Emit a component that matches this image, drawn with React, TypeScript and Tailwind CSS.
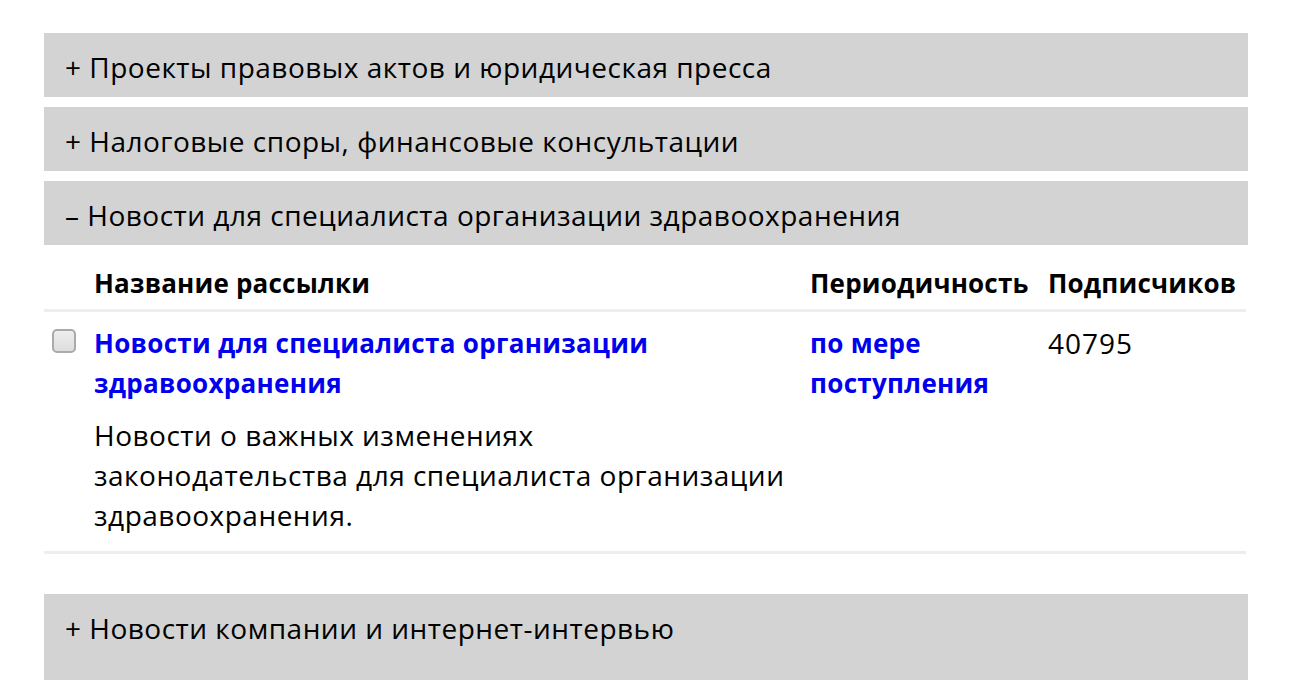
import React from "react";

const Bar: React.FC<{ sign: string; title: string; tall?: boolean }> = ({ sign, title, tall }) => (
  <div className={`bg-[#d3d3d3] pl-[21px] pt-[14px] ${tall ? "h-[100px]" : "h-[64px]"}`}>
    <span className="text-[28px] leading-[40px] tracking-[0.5px] text-black">
      {sign} {title}
    </span>
  </div>
);

export default function App() {
  return (
    <div className="min-h-[680px] bg-white font-['Open_Sans',sans-serif] overflow-hidden">
      <div className="mx-[44px] pt-[33px] flex flex-col">
        <Bar sign="+" title="Проекты правовых актов и юридическая пресса" />
        <div className="h-[10px]" />
        <Bar sign="+" title="Налоговые споры, финансовые консультации" />
        <div className="h-[10px]" />
        <Bar sign="–" title="Новости для специалиста организации здравоохранения" />

        <div className="grid grid-cols-[50px_716px_238px_198px] leading-[40px]">
          <div className="border-b-[3px] border-[#eee] h-[67px]" />
          <div className="border-b-[3px] border-[#eee] h-[67px] pt-[18px] text-[26px] tracking-[0.2px] font-bold text-black">Название рассылки</div>
          <div className="border-b-[3px] border-[#eee] h-[67px] pt-[18px] text-[26px] tracking-[0.2px] font-bold text-black whitespace-nowrap">Периодичность</div>
          <div className="border-b-[3px] border-[#eee] h-[67px] pt-[18px] text-[26px] tracking-[0.2px] font-bold text-black whitespace-nowrap">Подписчиков</div>

          <div className="border-b-[3px] border-[#eee] pt-[17px]">
            <div className="ml-[8px] w-[24px] h-[24px] rounded-[5px] border-2 border-[#aaa] bg-gradient-to-b from-[#eee] to-[#ddd]" />
          </div>
          <div className="border-b-[3px] border-[#eee] pt-[11px] pb-[16px] pr-[12px]">
            <a className="block text-[26px] leading-[40px] tracking-[0.3px] font-bold text-[#0000ee]">Новости для специалиста организации здравоохранения</a>
            <p className="mt-[12px] text-[28px] leading-[40px] tracking-[0.5px] text-black max-w-[700px]">
              Новости о важных изменениях законодательства для специалиста организации здравоохранения.
            </p>
          </div>
          <div className="border-b-[3px] border-[#eee] pt-[11px] pr-[10px]">
            <a className="block text-[26px] leading-[40px] tracking-[0.3px] font-bold text-[#0000ee]">по мере поступления</a>
          </div>
          <div className="border-b-[3px] border-[#eee] pt-[11px] text-[28px] leading-[40px] tracking-[1px] text-black">40795</div>
        </div>

        <div className="h-[40px]" />
        <Bar sign="+" title="Новости компании и интернет-интервью" tall />
      </div>
    </div>
  );
}
